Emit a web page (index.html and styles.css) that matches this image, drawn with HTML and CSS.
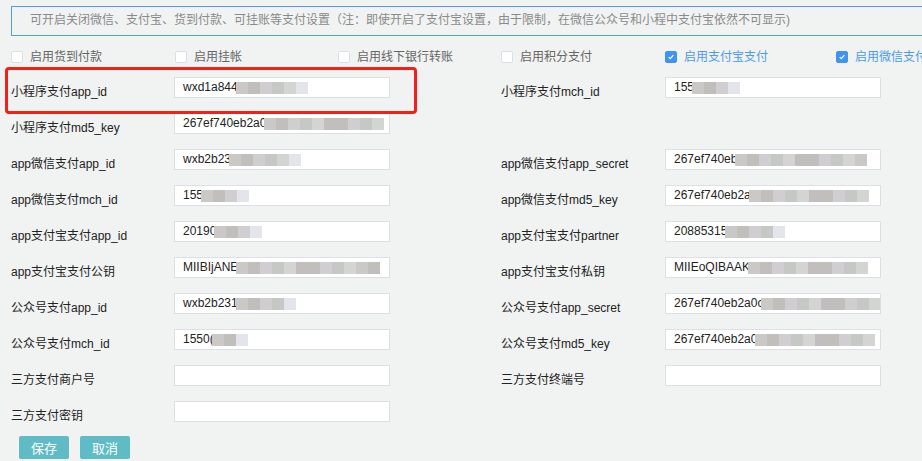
FILE: index.html
```html
<!DOCTYPE html>
<html lang="zh">
<head>
<meta charset="utf-8">
<title>支付设置</title>
<link rel="stylesheet" href="styles.css">
</head>
<body>
<div class="page">
  <div class="notice">可开启关闭微信、支付宝、货到付款、可挂账等支付设置（注：即使开启了支付宝设置，由于限制，在微信公众号和小程中支付宝依然不可显示)</div>

  <div class="checks">
    <label class="chk"><span class="box"></span>启用货到付款</label>
    <label class="chk"><span class="box"></span>启用挂帐</label>
    <label class="chk"><span class="box"></span>启用线下银行转账</label>
    <label class="chk"><span class="box"></span>启用积分支付</label>
    <label class="chk on"><span class="box"><svg viewBox="0 0 12 12"><path d="M3.2 6.2 L5.2 8 L8.8 3.8" fill="none" stroke="#fff" stroke-width="1.4"/></svg></span>启用支付宝支付</label>
    <label class="chk on"><span class="box"><svg viewBox="0 0 12 12"><path d="M3.2 6.2 L5.2 8 L8.8 3.8" fill="none" stroke="#fff" stroke-width="1.4"/></svg></span>启用微信支付</label>
  </div>

  <div class="form">
    <div class="lbl">小程序支付app_id</div>
    <div class="field">wxd1a844<span class="m"><i></i><i></i><i></i><i></i><i></i><i class="lt"></i></span></div>
    <div class="gap"></div>
    <div class="lbl">小程序支付mch_id</div>
    <div class="field">155<span class="m"><i></i><i></i><i></i><i class="lt"></i></span></div>

    <div class="lbl">小程序支付md5_key</div>
    <div class="field">267ef740eb2a0<span class="m"><i></i><i></i><i></i><i></i><i></i><i></i><i></i><i></i><i></i><i></i></span></div>
    <div class="gap"></div>
    <div class="lbl"></div>
    <div class="empty"></div>

    <div class="lbl">app微信支付app_id</div>
    <div class="field">wxb2b23<span class="m"><i></i><i></i><i></i><i></i><i></i><i class="lt"></i></span></div>
    <div class="gap"></div>
    <div class="lbl">app微信支付app_secret</div>
    <div class="field">267ef740eb<span class="m"><i></i><i></i><i></i><i></i><i></i><i></i><i></i><i></i><i></i><i></i><i></i></span></div>

    <div class="lbl">app微信支付mch_id</div>
    <div class="field">155<span class="m"><i></i><i></i><i></i><i class="lt"></i></span></div>
    <div class="gap"></div>
    <div class="lbl">app微信支付md5_key</div>
    <div class="field">267ef740eb2a<span class="m"><i></i><i></i><i></i><i></i><i></i><i></i><i></i><i></i><i></i><i></i></span></div>

    <div class="lbl">app支付宝支付app_id</div>
    <div class="field">20190<span class="m"><i></i><i></i><i></i><i class="lt"></i></span></div>
    <div class="gap"></div>
    <div class="lbl">app支付宝支付partner</div>
    <div class="field">20885315<span class="m"><i></i><i></i><i></i><i></i><i class="lt"></i></span></div>

    <div class="lbl">app支付宝支付公钥</div>
    <div class="field">MIIBIjANE<span class="m"><i></i><i></i><i></i><i></i><i></i><i></i><i></i><i></i><i></i><i></i><i></i><i></i></span></div>
    <div class="gap"></div>
    <div class="lbl">app支付宝支付私钥</div>
    <div class="field">MIIEoQIBAAK<span class="m"><i></i><i></i><i></i><i></i><i></i><i></i><i></i><i></i><i></i><i></i></span></div>

    <div class="lbl">公众号支付app_id</div>
    <div class="field">wxb2b231<span class="m"><i></i><i></i><i></i><i></i><i class="lt"></i></span></div>
    <div class="gap"></div>
    <div class="lbl">公众号支付app_secret</div>
    <div class="field">267ef740eb2a0c<span class="m"><i></i><i></i><i></i><i></i><i></i><i></i><i></i><i></i><i></i><i></i></span></div>

    <div class="lbl">公众号支付mch_id</div>
    <div class="field">1550(<span class="m"><i></i><i></i><i class="lt"></i></span></div>
    <div class="gap"></div>
    <div class="lbl">公众号支付md5_key</div>
    <div class="field">267ef740eb2a0<span class="m"><i></i><i></i><i></i><i></i><i></i><i></i><i></i><i></i><i></i><i></i></span></div>

    <div class="lbl">三方支付商户号</div>
    <div class="field"></div>
    <div class="gap"></div>
    <div class="lbl">三方支付终端号</div>
    <div class="field"></div>

    <div class="lbl">三方支付密钥</div>
    <div class="field"></div>
    <div class="gap"></div>
    <div class="lbl"></div>
    <div class="empty"></div>
  </div>

  <div class="actions">
    <button class="btn">保存</button>
    <button class="btn">取消</button>
  </div>

  <div class="highlight"></div>
</div>
</body>
</html>
```

FILE: styles.css
```css
* { box-sizing: border-box; }
html, body {
  margin: 0;
  padding: 0;
  background: #f1f2f2;
  overflow: hidden;
}
body {
  width: 922px;
  height: 461px;
  font-family: "Liberation Sans", "Noto Sans CJK SC", sans-serif;
  font-size: 12px;
  color: #222;
}
.page {
  position: relative;
  padding: 6px 0 0 11px;
}
.notice {
  height: 30px;
  width: 960px;
  border: 1px solid #4d9ff2;
  background: #f1f2f2;
  color: #8a8a8a;
  font-size: 12px;
  line-height: 27px;
  padding-left: 18px;
  white-space: nowrap;
}
.checks {
  display: grid;
  grid-template-columns: 164px 163px 163px 164px 171px 164px;
  margin-top: 13px;
  height: 15px;
  white-space: nowrap;
}
.chk {
  display: flex;
  align-items: center;
  color: #666;
  font-size: 12px;
  line-height: 14px;
}
.chk.on { color: #4a9af2; }
.box {
  width: 12px;
  height: 12px;
  border: 1px solid #dcdfe6;
  border-radius: 2px;
  background: #fff;
  margin-right: 7px;
  display: inline-flex;
}
.chk.on .box {
  background: #3f93f3;
  border-color: #3f93f3;
}
.box svg { width: 10px; height: 10px; }

.form {
  display: grid;
  grid-template-columns: 163px 216px 111px 164px 216px;
  grid-auto-rows: 36px;
  margin-top: 13px;
}
.lbl {
  padding-top: 7px;
  line-height: 16px;
  color: #222;
  white-space: nowrap;
}
.field {
  height: 21px;
  border: 1px solid #dcdfe6;
  background: #fff;
  padding-left: 8px;
  line-height: 19px;
  color: #222;
  white-space: nowrap;
  display: flex;
  align-items: center;
  overflow: hidden;
}
.m {
  display: inline-flex;
  height: 12px;
  margin-left: -2px;
}
.m i {
  display: block;
  width: 12px;
  height: 12px;
  background: #c6c6c4;
}
.m i:nth-child(5n+1) { background: #cbc8c8; }
.m i:nth-child(5n+2) { background: #c0bfbc; }
.m i:nth-child(5n+3) { background: #d1ced2; }
.m i:nth-child(5n+4) { background: #c6c8c6; }
.m i:nth-child(5n+5) { background: #d4d4d2; }
.m i:nth-child(7n+6) { background: #c2bdbf; }
.m i.lt { background: #e4e5ea; }

.actions {
  display: flex;
  gap: 11px;
  padding-left: 8px;
  margin-top: -1px;
}
.btn {
  width: 50px;
  height: 23px;
  border: none;
  border-radius: 2px;
  background: #5fbcc7;
  color: #fff;
  font-family: "Liberation Sans", "Noto Sans CJK SC", sans-serif;
  font-size: 13px;
  padding: 0;
}
.highlight {
  position: absolute;
  left: 5px;
  top: 67px;
  width: 412px;
  height: 47px;
  border: 3px solid #f51f17;
  border-radius: 4px;
}
```
